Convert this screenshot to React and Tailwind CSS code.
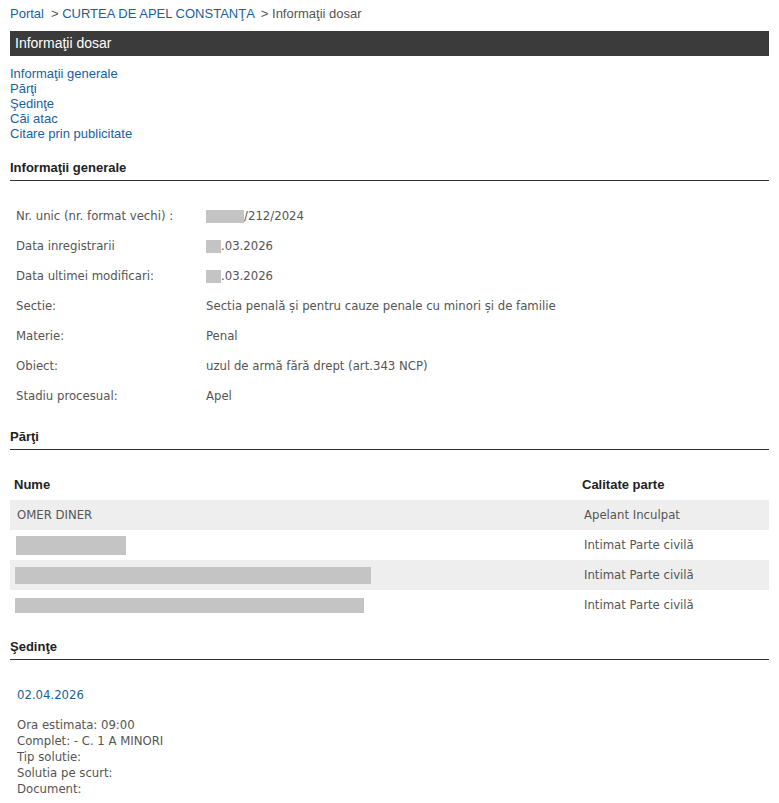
const info = [
  ["Nr. unic (nr. format vechi) :", "nr"],
  ["Data inregistrarii", "d1"],
  ["Data ultimei modificari:", "d2"],
  ["Sectie:", "Sectia penală și pentru cauze penale cu minori și de familie"],
  ["Materie:", "Penal"],
  ["Obiect:", "uzul de armă fără drept (art.343 NCP)"],
  ["Stadiu procesual:", "Apel"],
];

const parti = [
  { name: "OMER DINER", role: "Apelant Inculpat" },
  { bar: "w-[110px] h-[19px] ml-[6px]", role: "Intimat Parte civilă" },
  { bar: "w-[356px] h-[17px] ml-[5px]", role: "Intimat Parte civilă" },
  { bar: "w-[349px] h-[15px] ml-[5px]", role: "Intimat Parte civilă" },
];

function Value({ v }) {
  if (v === "nr")
    return (
      <span className="flex items-center">
        <span className="inline-block w-[38px] h-[13px] bg-[#c4c4c4]" />
        /212/2024
      </span>
    );
  if (v === "d1" || v === "d2")
    return (
      <span className="flex items-center">
        <span className="inline-block w-[15px] h-[13px] bg-[#c4c4c4]" />
        .03.2026
      </span>
    );
  return <span>{v}</span>;
}

function Heading({ children }) {
  return (
    <div className="mx-[10px] border-b border-[#333] pb-[4px] text-[13px] font-bold text-[#222] leading-[16px]">
      {children}
    </div>
  );
}

export default function App() {
  const body = { fontFamily: "Tahoma, 'DejaVu Sans Condensed', 'DejaVu Sans', sans-serif" };
  return (
    <div className="w-[779px] min-h-[803px] bg-white font-['Liberation_Sans',Arial,sans-serif]">
      <div className="pt-[6px] px-[10px] text-[13px] leading-[16px] text-[#555]">
        <span className="text-[#1a5fa0]">Portal</span>
        <span className="ml-[7px]">&gt; </span>
        <span className="text-[#1a5fa0]">CURTEA DE APEL CONSTANŢA</span>
        <span className="ml-[6px]">&gt; Informaţii dosar</span>
      </div>
      <div className="mt-[9px] mx-[10px] h-[25px] bg-[#3b3b3b] text-white text-[14px] leading-[25px] px-[5px]">
        Informaţii dosar
      </div>
      <div className="mt-[10px] px-[10px] flex flex-col text-[13px] leading-[15px] text-[#1a5fa0]">
        <span>Informaţii generale</span>
        <span>Părţi</span>
        <span>Şedinţe</span>
        <span>Căi atac</span>
        <span>Citare prin publicitate</span>
      </div>

      <div className="mt-[19px]">
        <Heading>Informaţii generale</Heading>
      </div>
      <div className="mt-[20px] flex flex-col text-[13px] text-[#555]" style={body}>
        {info.map(([k, v]) => (
          <div key={k} className="flex h-[30px] items-center">
            <span className="w-[206px] pl-[16px] shrink-0">{k}</span>
            <Value v={v} />
          </div>
        ))}
      </div>

      <div className="mt-[18px]">
        <Heading>Părţi</Heading>
      </div>
      <div className="mt-[19px] mx-[10px]">
        <div className="flex h-[31px] items-start pt-[6px] text-[13px] font-bold text-[#222]">
          <span className="flex-1 pl-[4px]">Nume</span>
          <span className="w-[187px]">Calitate parte</span>
        </div>
        {parti.map((p, i) => (
          <div
            key={i}
            className={`flex h-[30px] items-center text-[13px] text-[#555] ${i % 2 === 0 ? "bg-[#eeeeee]" : ""}`}
            style={body}
          >
            <span className="flex-1 flex items-center">
              {p.name ? <span className="pl-[7px]">{p.name}</span> : <span className={`bg-[#c4c4c4] ${p.bar}`} />}
            </span>
            <span className="w-[185px]">{p.role}</span>
          </div>
        ))}
      </div>

      <div className="mt-[19px]">
        <Heading>Şedinţe</Heading>
      </div>
      <div className="px-[17px] text-[13px] text-[#555]" style={body}>
        <div className="mt-[27px] text-[#1a5fa0] leading-[16px]">02.04.2026</div>
        <div className="mt-[14px] flex flex-col leading-[16px]">
          <span>Ora estimata: 09:00</span>
          <span>Complet: - C. 1 A MINORI</span>
          <span>Tip solutie:</span>
          <span>Solutia pe scurt:</span>
          <span>Document:</span>
        </div>
      </div>
    </div>
  );
}
